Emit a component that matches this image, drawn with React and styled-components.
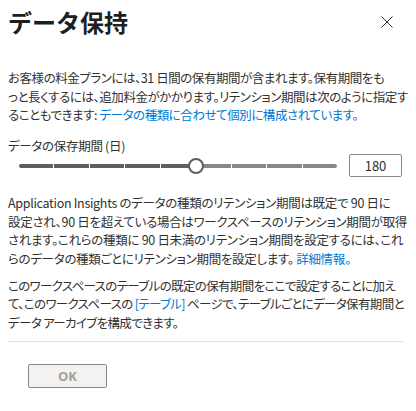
import React from "react";
import styled, { createGlobalStyle } from "styled-components";

const GlobalStyle = createGlobalStyle`
  html, body {
    margin: 0;
    padding: 0;
    background: #ffffff;
  }
  body {
    font-family: "Noto Sans CJK JP", sans-serif;
    color: #323130;
  }
`;

const Dialog = styled.div`
  width: 416px;
  box-sizing: border-box;
  padding: 0 13px 0 8px;
`;

const Header = styled.div`
  display: flex;
  align-items: center;
  justify-content: space-between;
  height: 44px;
`;

const Title = styled.h1`
  margin: 0;
  font-size: 24px;
  font-weight: 700;
  line-height: 32px;
  color: #201f1e;
`;

const CloseButton = styled.button`
  width: 32px;
  height: 32px;
  padding: 0;
  border: none;
  background: transparent;
  display: flex;
  align-items: center;
  justify-content: center;
  color: #323130;
  cursor: pointer;
`;

const Body = styled.div`
  padding-top: 25px;
  display: flex;
  flex-direction: column;
`;

const Text = styled.p`
  margin: 0 0 ${p => p.$gap || 0}px;
  font-size: 12.5px;
  letter-spacing: ${p => p.$spacing ?? -0.3}px;
  line-height: 18.5px;
  font-feature-settings: "palt";
  white-space: nowrap;
`;

const Link = styled.a`
  color: #0078d4;
  text-decoration: none;
  cursor: pointer;
`;

const Label = styled.div`
  font-size: 12.5px;
  letter-spacing: -0.3px;
  line-height: 18.5px;
  font-feature-settings: "palt";
`;

const SliderRow = styled.div`
  display: flex;
  align-items: center;
  gap: 12px;
  margin: -1px 0 17px 11px;
  height: 23px;
`;

const TrackWrap = styled.div`
  position: relative;
  width: 318px;
  height: 16px;
  display: flex;
  align-items: center;
`;

const Track = styled.div`
  display: flex;
  width: 100%;
  height: 4px;
  gap: 1px;
  border-radius: 2px;
  overflow: hidden;
`;

const Segment = styled.div`
  flex: 1;
  background: ${p => (p.$filled ? "#605e5c" : "#8a8886")};
`;

const Thumb = styled.div`
  position: absolute;
  top: 0;
  width: 16px;
  height: 16px;
  box-sizing: border-box;
  border-radius: 50%;
  border: 2px solid #605e5c;
  background: #ffffff;
  transform: translateX(-50%);
`;

const NumberBox = styled.input`
  width: 53px;
  height: 23px;
  box-sizing: border-box;
  border: 1px solid #8a8886;
  border-radius: 2px;
  text-align: center;
  font-family: "Noto Sans CJK JP", sans-serif;
  font-size: 13px;
  color: #323130;
  padding: 0;
  outline: none;
`;

const Divider = styled.div`
  height: 1px;
  background: #e1dfdd;
  margin-top: 9px;
`;

const Footer = styled.div`
  padding: 20px 0 0 20px;
`;

const OkButton = styled.button`
  width: 79px;
  height: 24px;
  border: 1px solid #8a8886;
  border-radius: 2px;
  background: #f3f2f1;
  color: #a19f9d;
  font-family: "Open Sans", sans-serif;
  font-weight: 700;
  font-size: 13px;
  padding: 0;
`;

const SEGMENTS = 9;
const FILLED = 5;

function RetentionSlider({ value }) {
  const pct = (FILLED / SEGMENTS) * 100;
  return (
    <SliderRow>
      <TrackWrap>
        <Track>
          {Array.from({ length: SEGMENTS }).map((_, i) => (
            <Segment key={i} $filled={i < FILLED} />
          ))}
        </Track>
        <Thumb style={{ left: `${pct}%` }} />
      </TrackWrap>
      <NumberBox value={value} readOnly />
    </SliderRow>
  );
}

export default function App() {
  return (
    <>
      <GlobalStyle />
      <Dialog>
        <Header>
          <Title>データ保持</Title>
          <CloseButton aria-label="閉じる">
            <svg width="12" height="12" viewBox="0 0 12 12">
              <path d="M0.5 0.5 L11.5 11.5 M11.5 0.5 L0.5 11.5" stroke="#323130" strokeWidth="1" fill="none" />
            </svg>
          </CloseButton>
        </Header>
        <Body>
          <Text $gap={12} $spacing={-0.45}>
            お客様の料金プランには、31 日間の保有期間が含まれます。保有期間をも<br />
            っと長くするには、追加料金がかかります。リテンション期間は次のように指定す<br />
            ることもできます: <Link>データの種類に合わせて個別に構成されています。</Link>
          </Text>
          <Label>データの保存期間 (日)</Label>
          <RetentionSlider value="180" />
          <Text $gap={8.5}>
            Application Insights のデータの種類のリテンション期間は既定で 90 日に<br />
            設定され、90 日を超えている場合はワークスペースのリテンション期間が取得<br />
            されます。これらの種類に 90 日未満のリテンション期間を設定するには、これ<br />
            らのデータの種類ごとにリテンション期間を設定します。 <Link>詳細情報。</Link>
          </Text>
          <Text $spacing={-0.65}>
            このワークスペースのテーブルの既定の保有期間をここで設定することに加え<br />
            て、このワークスペースの <Link>[テーブル]</Link> ページで、テーブルごとにデータ保有期間と<br />
            データ アーカイブを構成できます。
          </Text>
          <Divider />
          <Footer>
            <OkButton disabled>OK</OkButton>
          </Footer>
        </Body>
      </Dialog>
    </>
  );
}
